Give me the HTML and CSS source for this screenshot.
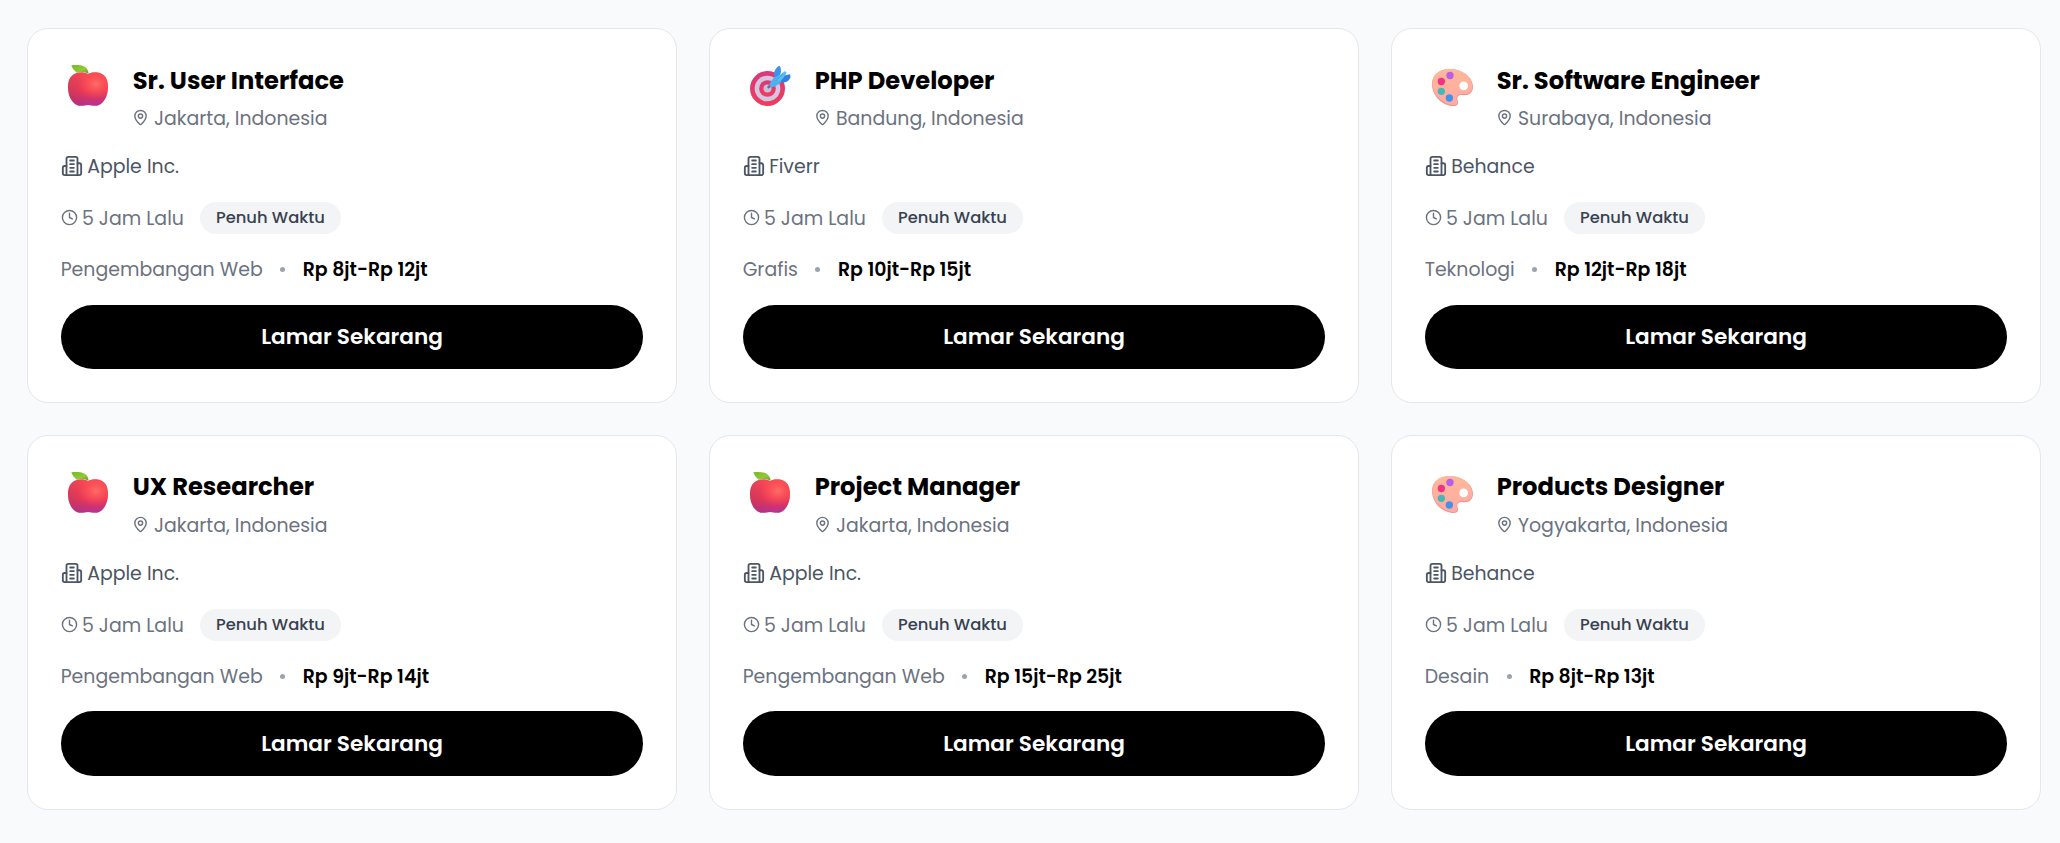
FILE: index.html
```html
<!DOCTYPE html>
<html lang="id">
<head>
<meta charset="utf-8">
<title>Lowongan</title>
<link rel="stylesheet" href="styles.css">
</head>
<body>
<svg class="defs" width="0" height="0" aria-hidden="true">
  <defs>
    <linearGradient id="gRed" x1="0" y1="0" x2="0" y2="1"><stop offset="0" stop-color="#f94a55"/><stop offset=".55" stop-color="#ee3a55"/><stop offset=".8" stop-color="#cf3370"/><stop offset="1" stop-color="#b5309a"/></linearGradient>
    <radialGradient id="gGlow" cx=".7" cy=".35" r=".45"><stop offset="0" stop-color="#ff6d66"/><stop offset="1" stop-color="#ff4b50" stop-opacity="0"/></radialGradient>
    <linearGradient id="gShade" x1="0" y1=".6" x2=".5" y2=".5"><stop offset="0" stop-color="#a8325e" stop-opacity=".4"/><stop offset="1" stop-color="#a8325e" stop-opacity="0"/></linearGradient>
    <linearGradient id="gLeaf" x1="0" y1="0" x2="1" y2="1"><stop offset="0" stop-color="#76b82a"/><stop offset=".6" stop-color="#8fca36"/><stop offset="1" stop-color="#5fa02a"/></linearGradient>
    <linearGradient id="gRing" x1="0" y1="0" x2="0" y2="1"><stop offset="0" stop-color="#d83a7c"/><stop offset="1" stop-color="#ef3c5c"/></linearGradient>
    <linearGradient id="gPal" x1="0" y1="0" x2="0" y2="1"><stop offset="0" stop-color="#ffb898"/><stop offset="1" stop-color="#ffaaa6"/></linearGradient>
  </defs>
  <symbol id="apple" viewBox="3 6 177 144">
    <path d="M84 42C74 36 58 35 44 41C30 48 24 62 24 82C24 108 36 132 56 137C68 139 76 135 84 135C92 135 100 139 112 137C132 132 144 108 144 82C144 62 139 48 125 41C111 35 94 36 84 42Z" fill="url(#gRed)"/>
    <path d="M84 42C74 36 58 35 44 41C30 48 24 62 24 82C24 108 36 132 56 137C68 139 76 135 84 135C92 135 100 139 112 137C132 132 144 108 144 82C144 62 139 48 125 41C111 35 94 36 84 42Z" fill="url(#gShade)"/>
    <path d="M84 42C74 36 58 35 44 41C30 48 24 62 24 82C24 108 36 132 56 137C68 139 76 135 84 135C92 135 100 139 112 137C132 132 144 108 144 82C144 62 139 48 125 41C111 35 94 36 84 42Z" fill="url(#gGlow)"/>
    <path d="M34 16C55 14 76 14 84 32Q86 37 85 41C77 36 62 35 50 38C43 32 37 26 34 16Z" fill="url(#gLeaf)"/>
  </symbol>
  <symbol id="target" viewBox="3 6 177 144">
    <circle cx="76.500" cy="85.500" r="52.500" fill="url(#gRing)"/>
    <circle cx="76.500" cy="85.500" r="38.500" fill="#d5c6df"/>
    <circle cx="76.500" cy="85.500" r="25" fill="url(#gRing)"/>
    <circle cx="76.500" cy="85.500" r="12" fill="#c9bfd8"/>
    <path d="M80 81L100 63" stroke="#76698f" stroke-width="8" stroke-linecap="round"/>
    <path d="M82 77C84 64 94 54 105 44L124 58C114 73 101 80 88 82Z" fill="#4db2ef"/>
    <path d="M98 51C92 34 103 23 111 17Q117 18 117 36L114 46Z" fill="#3795f0"/>
    <path d="M124 47L143 43Q147 47 145 53C138 66 126 70 116 66Z" fill="#2e82e3"/>
    <path d="M103 56Q116 42 128 34Q135 34 132 42Q125 57 110 65Z" fill="#56bdf5"/>
    <path d="M101 62L121 44" stroke="#3c9fe8" stroke-width="3" stroke-linecap="round"/>
  </symbol>
  <symbol id="palette" viewBox="3 6 177 144">
    <path fill-rule="evenodd" d="M78 27C46 27 24 45 24 72C24 104 50 134 84 138C100 139 105 132 101 122C98 112 101 104 114 105C133 109 147 98 147 81C147 52 115 27 78 27ZM119 65A12.500 12.500 0 1 1 119 90A12.500 12.500 0 1 1 119 65Z" fill="#f28f88"/>
    <path fill-rule="evenodd" d="M78 27C46 27 25 44 25 70C25 101 51 130 84 135C99 136 103 130 99 120C96 109 101 101 114 102C132 105 145 95 145 80C145 52 115 27 78 27ZM119 65A12.500 12.500 0 1 1 119 90A12.500 12.500 0 1 1 119 65Z" fill="url(#gPal)"/>
    <circle cx="119" cy="77.500" r="13" fill="#fff"/>
    <circle cx="78" cy="46.500" r="11" fill="#ba5ee3"/>
    <circle cx="52" cy="64.500" r="11" fill="#ee3583"/>
    <circle cx="52" cy="94" r="11" fill="#48b7b4"/>
    <circle cx="76" cy="114" r="11" fill="#4292ea"/>
  </symbol>
  <symbol id="pin" viewBox="0 0 24 24"><path d="M20 10c0 5-5.500 10.200-7.400 11.800a1 1 0 0 1-1.200 0C9.500 20.200 4 15 4 10a8 8 0 0 1 16 0"/><circle cx="12" cy="10" r="3"/></symbol>
  <symbol id="building" viewBox="0 0 24 24"><path d="M6 22V4a2 2 0 0 1 2-2h8a2 2 0 0 1 2 2v18Z"/><path d="M6 12H4a2 2 0 0 0-2 2v6a2 2 0 0 0 2 2h2"/><path d="M18 9h2a2 2 0 0 1 2 2v9a2 2 0 0 1-2 2h-2"/><path d="M10 6h4M10 10h4M10 14h4M10 18h4"/></symbol>
  <symbol id="clock" viewBox="0 0 24 24"><circle cx="12" cy="12" r="10"/><path d="M12 6v6l4 2"/></symbol>
</svg>

<main class="jobs">
  <article class="card">
    <header class="head"><svg class="logo"><use href="#apple"/></svg><div><h2 class="title">Sr. User Interface</h2><p class="place"><svg class="icon pin"><use href="#pin"/></svg><span>Jakarta, Indonesia</span></p></div></header>
    <p class="company"><svg class="icon building"><use href="#building"/></svg><span>Apple Inc.</span></p>
    <div class="meta"><svg class="icon clock"><use href="#clock"/></svg><span class="time">5 Jam Lalu</span><span class="badge">Penuh Waktu</span></div>
    <div class="pay"><span class="category">Pengembangan Web</span><i class="dot"></i><strong class="salary">Rp 8jt-Rp 12jt</strong></div>
    <button class="apply">Lamar Sekarang</button>
  </article>
  <article class="card">
    <header class="head"><svg class="logo"><use href="#target"/></svg><div><h2 class="title">PHP Developer</h2><p class="place"><svg class="icon pin"><use href="#pin"/></svg><span>Bandung, Indonesia</span></p></div></header>
    <p class="company"><svg class="icon building"><use href="#building"/></svg><span>Fiverr</span></p>
    <div class="meta"><svg class="icon clock"><use href="#clock"/></svg><span class="time">5 Jam Lalu</span><span class="badge">Penuh Waktu</span></div>
    <div class="pay"><span class="category">Grafis</span><i class="dot"></i><strong class="salary">Rp 10jt-Rp 15jt</strong></div>
    <button class="apply">Lamar Sekarang</button>
  </article>
  <article class="card">
    <header class="head"><svg class="logo"><use href="#palette"/></svg><div><h2 class="title">Sr. Software Engineer</h2><p class="place"><svg class="icon pin"><use href="#pin"/></svg><span>Surabaya, Indonesia</span></p></div></header>
    <p class="company"><svg class="icon building"><use href="#building"/></svg><span>Behance</span></p>
    <div class="meta"><svg class="icon clock"><use href="#clock"/></svg><span class="time">5 Jam Lalu</span><span class="badge">Penuh Waktu</span></div>
    <div class="pay"><span class="category">Teknologi</span><i class="dot"></i><strong class="salary">Rp 12jt-Rp 18jt</strong></div>
    <button class="apply">Lamar Sekarang</button>
  </article>
  <article class="card">
    <header class="head"><svg class="logo"><use href="#apple"/></svg><div><h2 class="title">UX Researcher</h2><p class="place"><svg class="icon pin"><use href="#pin"/></svg><span>Jakarta, Indonesia</span></p></div></header>
    <p class="company"><svg class="icon building"><use href="#building"/></svg><span>Apple Inc.</span></p>
    <div class="meta"><svg class="icon clock"><use href="#clock"/></svg><span class="time">5 Jam Lalu</span><span class="badge">Penuh Waktu</span></div>
    <div class="pay"><span class="category">Pengembangan Web</span><i class="dot"></i><strong class="salary">Rp 9jt-Rp 14jt</strong></div>
    <button class="apply">Lamar Sekarang</button>
  </article>
  <article class="card">
    <header class="head"><svg class="logo"><use href="#apple"/></svg><div><h2 class="title">Project Manager</h2><p class="place"><svg class="icon pin"><use href="#pin"/></svg><span>Jakarta, Indonesia</span></p></div></header>
    <p class="company"><svg class="icon building"><use href="#building"/></svg><span>Apple Inc.</span></p>
    <div class="meta"><svg class="icon clock"><use href="#clock"/></svg><span class="time">5 Jam Lalu</span><span class="badge">Penuh Waktu</span></div>
    <div class="pay"><span class="category">Pengembangan Web</span><i class="dot"></i><strong class="salary">Rp 15jt-Rp 25jt</strong></div>
    <button class="apply">Lamar Sekarang</button>
  </article>
  <article class="card">
    <header class="head"><svg class="logo"><use href="#palette"/></svg><div><h2 class="title">Products Designer</h2><p class="place"><svg class="icon pin"><use href="#pin"/></svg><span>Yogyakarta, Indonesia</span></p></div></header>
    <p class="company"><svg class="icon building"><use href="#building"/></svg><span>Behance</span></p>
    <div class="meta"><svg class="icon clock"><use href="#clock"/></svg><span class="time">5 Jam Lalu</span><span class="badge">Penuh Waktu</span></div>
    <div class="pay"><span class="category">Desain</span><i class="dot"></i><strong class="salary">Rp 8jt-Rp 13jt</strong></div>
    <button class="apply">Lamar Sekarang</button>
  </article>
</main>
</body>
</html>
```
FILE: styles.css
```css
* { box-sizing: border-box; margin: 0; }
body {
  background: #f9fafb;
  font-family: Poppins, Inter, sans-serif;
  font-size: 18.920px;
  color: #6b7280;
  white-space: nowrap;
}
.defs { position: absolute; }
.jobs {
  display: grid;
  grid-template-columns: repeat(3, 650px);
  gap: 32px;
  padding: 28.300px 0 33px 27px;
}
.card {
  display: flex;
  flex-direction: column;
  height: 374.670px;
  padding: 33px 32.670px;
  background: #fff;
  border: 1px solid #e5e7eb;
  border-radius: 21px;
}
.head { display: flex; gap: 12.700px; height: 70.600px; }
.logo { width: 59px; height: 48px; margin-left: .33px; }
.title { height: 36px; margin-top: .4px; line-height: 36px; font-size: 24.200px; font-weight: 700; color: #000; }
.icon { flex: none; fill: none; stroke: currentColor; stroke-width: 2; stroke-linecap: round; stroke-linejoin: round; }
.place { display: flex; align-items: center; height: 30px; margin-top: 4.200px; margin-left: -1px; }
.place span, .company span, .time { padding-top: 2px; }
.pin { width: 17px; height: 17px; margin-right: 5.300px; }
.company { display: flex; align-items: center; height: 30px; margin-top: 18px; color: #4b5563; }
.building { width: 22px; height: 22px; margin-right: 4.500px; }
.meta { display: flex; align-items: center; height: 32px; margin-top: 21px; }
.clock { width: 17px; height: 17px; margin-right: 4.300px; }
.time { width: 118px; }
.badge {
  width: 141px;
  height: 32px;
  line-height: 31px;
  border-radius: 16px;
  background: #f3f4f6;
  color: #374151;
  font-size: 16.350px;
  font-weight: 500;
  text-align: center;
}
.pay { display: flex; align-items: center; height: 30px; margin-top: 21px; }
.dot { width: 5px; height: 5px; margin: 0 17.500px; border-radius: 50%; background: #9ca3af; }
.salary { font-weight: 600; color: #000; }
.apply {
  height: 64.300px;
  margin-top: 19.850px;
  padding: 0 0 .6px;
  border: 0;
  border-radius: 33px;
  background: #000;
  color: #fff;
  font: inherit;
  font-size: 21.600px;
  font-weight: 600;
}
```
